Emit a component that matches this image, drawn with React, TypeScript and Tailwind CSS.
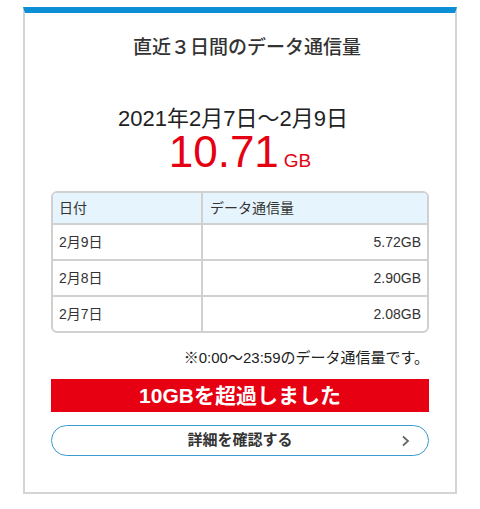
export default function App() {
  const rows = [
    { date: "2月9日", amount: "5.72GB" },
    { date: "2月8日", amount: "2.90GB" },
    { date: "2月7日", amount: "2.08GB" },
  ];

  return (
    <div
      className="h-[509px] w-[480px] bg-white pt-[7px]"
      style={{ fontFamily: '"Liberation Sans", "Noto Sans CJK JP", sans-serif' }}
    >
      <div className="ml-[23px] h-[487px] w-[434px] border-x-2 border-b-2 border-t-[6px] border-[#d4d4d4] border-t-[#0b8ed3]">
        <h1 className="pl-[14px] pt-[21px] text-center text-[19px] font-medium leading-[28px] text-[#333]">
          直近３日間のデータ通信量
        </h1>

        <div className="mt-[45px] pr-[14px] text-center text-[22px] leading-[24px] text-[#222]">
          2021年2月7日〜2月9日
        </div>
        <div className="flex items-baseline justify-center text-[#e50012]">
          <span className="text-[44px] leading-[42px]">10.71</span>
          <span className="ml-[5px] text-[19px] leading-[20px]">GB</span>
        </div>

        <div className="mx-[26px] mt-[18px]">
          <div className="overflow-hidden rounded-[6px] border-2 border-[#d0d0d0] text-[14px] text-[#333]">
            <div className="grid grid-cols-[150px_1fr] bg-[#e6f4fd]">
              <div className="h-[30px] border-r-2 border-[#d0d0d0] pl-[6px] leading-[30px]">日付</div>
              <div className="h-[30px] pl-[7px] leading-[30px]">データ通信量</div>
            </div>
            {rows.map((r) => (
              <div key={r.date} className="grid grid-cols-[150px_1fr] border-t-2 border-[#d0d0d0]">
                <div className="h-[34px] border-r-2 border-[#d0d0d0] pl-[6px] leading-[34px]">{r.date}</div>
                <div className="h-[34px] pr-[6px] text-right leading-[34px]">{r.amount}</div>
              </div>
            ))}
          </div>

          <p className="mt-[13px] text-right text-[15px] leading-[24px] text-[#222]">
            ※0:00〜23:59のデータ通信量です。
          </p>

          <div className="mt-[9px] flex h-[33px] items-center justify-center bg-[#e60012] text-[21px] font-bold text-white">
            10GBを超過しました
          </div>

          <button className="relative mt-[13px] flex h-[31px] w-full items-center justify-center rounded-full border-[1.5px] border-[#3a9ad2] text-[15px] font-bold text-[#333]">
            詳細を確認する
            <svg
              className="absolute right-[18px] top-1/2 -translate-y-1/2"
              width="9"
              height="13"
              viewBox="0 0 9 13"
              fill="none"
            >
              <path d="M2 2l5 4.5L2 11" stroke="#666" strokeWidth="1.8" />
            </svg>
          </button>
        </div>
      </div>
    </div>
  );
}
